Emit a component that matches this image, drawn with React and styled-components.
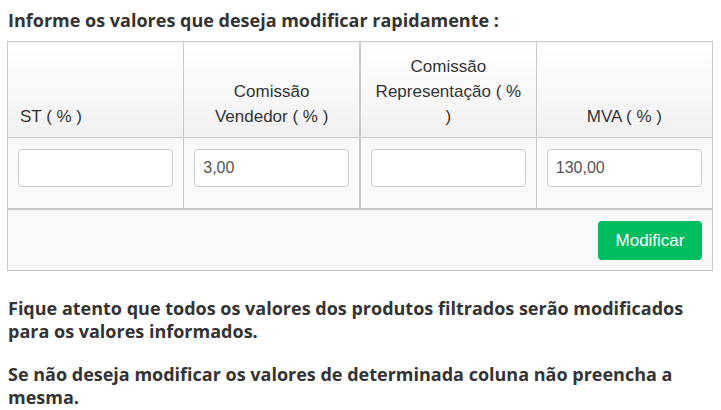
import styled, { createGlobalStyle } from 'styled-components'

const Global = createGlobalStyle`
  body {
    margin: 0;
    background: #fff;
  }
`

const Page = styled.div`
  padding: 8px 8px 0 7px;
  width: 721px;
  box-sizing: border-box;
`

const Title = styled.h4`
  margin: 0 0 9px 1px;
  font-family: "Open Sans", sans-serif;
  font-size: 18px;
  font-weight: 700;
  line-height: 24px;
  color: #333;
`

const Table = styled.table`
  width: 706px;
  border-collapse: collapse;
  font-family: "Liberation Sans", Arial, sans-serif;
  font-size: 17px;
  color: #333;
  border: 1px solid #c9c9c9;
`

const Th = styled.th`
  width: 25%;
  height: 95px;
  box-sizing: border-box;
  padding: 12px 12px 8px;
  border: 1px solid #c9c9c9;
  border-right-width: ${p => (p.thick ? '2px' : '1px')};
  vertical-align: bottom;
  text-align: ${p => (p.left ? 'left' : 'center')};
  font-weight: 400;
  line-height: 25px;
  background: linear-gradient(#fff, #f1f1f1);
`

const Td = styled.td`
  height: 70px;
  box-sizing: border-box;
  padding: 11px 10px 21px;
  border: 1px solid #c9c9c9;
  border-right-width: ${p => (p.thick ? '2px' : '1px')};
  vertical-align: top;
  background: #f9f9f9;
`

const FootCell = styled.td`
  height: 61px;
  box-sizing: border-box;
  padding: 11px 10px 10px;
  border-top: 2px solid #c9c9c9;
  text-align: right;
  vertical-align: top;
  background: #f9f9f9;
`

const Input = styled.input`
  display: block;
  width: 100%;
  height: 38px;
  box-sizing: border-box;
  padding: 6px 8px;
  border: 1px solid #ccc;
  border-radius: 4px;
  background: #fff;
  font-family: "Liberation Sans", Arial, sans-serif;
  font-size: 16px;
  color: #555;
  outline: none;
`

const Button = styled.button`
  width: 104px;
  height: 39px;
  border: none;
  border-radius: 4px;
  background: #00be5f;
  color: #fff;
  font-family: "Liberation Sans", Arial, sans-serif;
  font-size: 17px;
  cursor: pointer;
`

const Note = styled.p`
  margin: ${p => (p.first ? '26px' : '20px')} 0 0 1px;
  font-family: "Open Sans", sans-serif;
  font-size: 18px;
  font-weight: 700;
  line-height: 23px;
  color: #333;
`

const columns = [
  { label: 'ST ( % )', value: '', left: true },
  { label: 'Comissão Vendedor ( % )', value: '3,00', thick: true },
  { label: 'Comissão Representação ( % )', value: '' },
  { label: 'MVA ( % )', value: '130,00' },
]

const App = () => {
  return (
    <Page>
      <Global />
      <Title>Informe os valores que deseja modificar rapidamente :</Title>
      <Table>
        <thead>
          <tr>
            {columns.map((c, i) => (
              <Th key={i} left={c.left} thick={c.thick}>{c.label}</Th>
            ))}
          </tr>
        </thead>
        <tbody>
          <tr>
            {columns.map((c, i) => (
              <Td key={i} thick={c.thick}>
                <Input type="text" defaultValue={c.value} />
              </Td>
            ))}
          </tr>
        </tbody>
        <tfoot>
          <tr>
            <FootCell colSpan={4}>
              <Button>Modificar</Button>
            </FootCell>
          </tr>
        </tfoot>
      </Table>
      <Note first>Fique atento que todos os valores dos produtos filtrados serão modificados para os valores informados.</Note>
      <Note>Se não deseja modificar os valores de determinada coluna não preencha a mesma.</Note>
    </Page>
  )
}

export default App
